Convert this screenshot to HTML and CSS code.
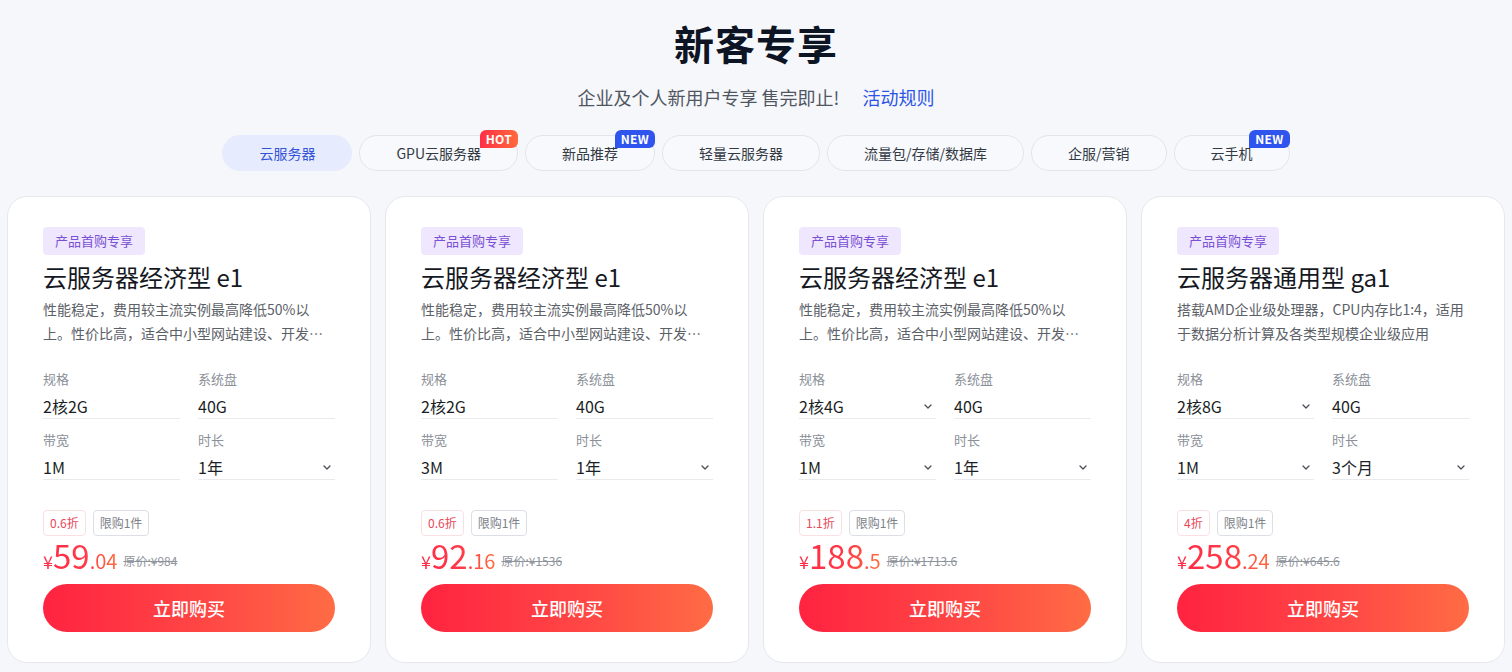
FILE: index.html
```html
<!DOCTYPE html>
<html lang="zh-CN">
<head>
<meta charset="utf-8">
<title>新客专享</title>
<link rel="stylesheet" href="styles.css">
</head>
<body>
<main class="page">
  <header class="hero">
    <h1 class="hero-title">新客专享</h1>
    <p class="hero-sub">企业及个人新用户专享 售完即止!<a class="hero-link" href="#">活动规则</a></p>
  </header>

  <nav class="tabs">
    <span class="tab tab-active">云服务器</span>
    <span class="tab">GPU云服务器<i class="badge badge-hot">HOT</i></span>
    <span class="tab">新品推荐<i class="badge badge-new">NEW</i></span>
    <span class="tab">轻量云服务器</span>
    <span class="tab">流量包/存储/数据库</span>
    <span class="tab">企服/营销</span>
    <span class="tab">云手机<i class="badge badge-new">NEW</i></span>
  </nav>

  <section class="cards">
    <article class="card">
      <span class="tag">产品首购专享</span>
      <h2 class="card-title">云服务器经济型 e1</h2>
      <p class="card-desc">性能稳定，费用较主流实例最高降低50%以上。性价比高，适合中小型网站建设、开发测试等场景</p>
      <div class="fields">
        <div class="field"><div class="field-label">规格</div><div class="field-value">2核2G</div></div>
        <div class="field"><div class="field-label">系统盘</div><div class="field-value">40G</div></div>
        <div class="field"><div class="field-label">带宽</div><div class="field-value">1M</div></div>
        <div class="field"><div class="field-label">时长</div><div class="field-value select">1年<svg class="chev" viewBox="0 0 8 5"><path d="M1 1l3 3 3-3"/></svg></div></div>
      </div>
      <div class="chips"><span class="chip chip-red">0.6折</span><span class="chip">限购1件</span></div>
      <div class="price"><span class="price-now"><span class="cur">¥</span><span class="int">59</span><span class="dec">.04</span></span><span class="price-old">原价:¥984</span></div>
      <button class="buy">立即购买</button>
    </article>

    <article class="card">
      <span class="tag">产品首购专享</span>
      <h2 class="card-title">云服务器经济型 e1</h2>
      <p class="card-desc">性能稳定，费用较主流实例最高降低50%以上。性价比高，适合中小型网站建设、开发测试等场景</p>
      <div class="fields">
        <div class="field"><div class="field-label">规格</div><div class="field-value">2核2G</div></div>
        <div class="field"><div class="field-label">系统盘</div><div class="field-value">40G</div></div>
        <div class="field"><div class="field-label">带宽</div><div class="field-value">3M</div></div>
        <div class="field"><div class="field-label">时长</div><div class="field-value select">1年<svg class="chev" viewBox="0 0 8 5"><path d="M1 1l3 3 3-3"/></svg></div></div>
      </div>
      <div class="chips"><span class="chip chip-red">0.6折</span><span class="chip">限购1件</span></div>
      <div class="price"><span class="price-now"><span class="cur">¥</span><span class="int">92</span><span class="dec">.16</span></span><span class="price-old">原价:¥1536</span></div>
      <button class="buy">立即购买</button>
    </article>

    <article class="card">
      <span class="tag">产品首购专享</span>
      <h2 class="card-title">云服务器经济型 e1</h2>
      <p class="card-desc">性能稳定，费用较主流实例最高降低50%以上。性价比高，适合中小型网站建设、开发测试等场景</p>
      <div class="fields">
        <div class="field"><div class="field-label">规格</div><div class="field-value select">2核4G<svg class="chev" viewBox="0 0 8 5"><path d="M1 1l3 3 3-3"/></svg></div></div>
        <div class="field"><div class="field-label">系统盘</div><div class="field-value">40G</div></div>
        <div class="field"><div class="field-label">带宽</div><div class="field-value select">1M<svg class="chev" viewBox="0 0 8 5"><path d="M1 1l3 3 3-3"/></svg></div></div>
        <div class="field"><div class="field-label">时长</div><div class="field-value select">1年<svg class="chev" viewBox="0 0 8 5"><path d="M1 1l3 3 3-3"/></svg></div></div>
      </div>
      <div class="chips"><span class="chip chip-red">1.1折</span><span class="chip">限购1件</span></div>
      <div class="price"><span class="price-now"><span class="cur">¥</span><span class="int">188</span><span class="dec">.5</span></span><span class="price-old">原价:¥1713.6</span></div>
      <button class="buy">立即购买</button>
    </article>

    <article class="card">
      <span class="tag">产品首购专享</span>
      <h2 class="card-title">云服务器通用型 ga1</h2>
      <p class="card-desc">搭载AMD企业级处理器，CPU内存比1:4，适用于数据分析计算及各类型规模企业级应用</p>
      <div class="fields">
        <div class="field"><div class="field-label">规格</div><div class="field-value select">2核8G<svg class="chev" viewBox="0 0 8 5"><path d="M1 1l3 3 3-3"/></svg></div></div>
        <div class="field"><div class="field-label">系统盘</div><div class="field-value">40G</div></div>
        <div class="field"><div class="field-label">带宽</div><div class="field-value select">1M<svg class="chev" viewBox="0 0 8 5"><path d="M1 1l3 3 3-3"/></svg></div></div>
        <div class="field"><div class="field-label">时长</div><div class="field-value select">3个月<svg class="chev" viewBox="0 0 8 5"><path d="M1 1l3 3 3-3"/></svg></div></div>
      </div>
      <div class="chips"><span class="chip chip-red">4折</span><span class="chip">限购1件</span></div>
      <div class="price"><span class="price-now"><span class="cur">¥</span><span class="int">258</span><span class="dec">.24</span></span><span class="price-old">原价:¥645.6</span></div>
      <button class="buy">立即购买</button>
    </article>
  </section>
</main>
</body>
</html>
```

FILE: styles.css
```css
* { box-sizing: border-box; }
html, body { margin: 0; padding: 0; }
body {
  background: #f6f7fb;
  font-family: "Noto Sans CJK SC", "Noto Sans", "Liberation Sans", sans-serif;
  color: #1f2329;
  overflow: hidden;
}
.page { width: 1512px; height: 672px; }

.hero { text-align: center; padding-top: 13px; }
.hero-title {
  margin: 0;
  font-size: 40px;
  line-height: 60px;
  font-weight: 700;
  color: #0d1424;
  letter-spacing: 1px;
}
.hero-sub {
  margin: 11px 0 0;
  font-size: 18px;
  line-height: 26px;
  color: #50565f;
}
.hero-link {
  color: #2c55e8;
  text-decoration: none;
  margin-left: 23px;
}

.tabs {
  display: flex;
  justify-content: center;
  gap: 7px;
  margin-top: 25px;
}
.tab {
  position: relative;
  height: 36px;
  line-height: 34px;
  padding: 0 36px;
  border: 1px solid #e2e5ec;
  border-radius: 18px;
  font-size: 14px;
  color: #333a44;
  background: #f8f9fc;
  white-space: nowrap;
}
.tab-active {
  background: #e6ecfd;
  border-color: #e6ecfd;
  color: #3453d6;
}
.badge {
  position: absolute;
  right: -1px;
  top: -6px;
  height: 18px;
  line-height: 18px;
  padding: 0 6px;
  font-size: 12px;
  font-style: normal;
  font-weight: 700;
  color: #fff;
  border-radius: 6px 6px 6px 0;
  letter-spacing: 0.3px;
}
.badge-hot { background: linear-gradient(90deg, #ff2e44, #ff6a3d); }
.badge-new { background: #2f55ee; }

.cards {
  display: flex;
  gap: 14px;
  padding: 0 7px;
  margin-top: 25px;
}
.card {
  flex: 1 1 0;
  height: 467px;
  background: #fff;
  border: 1px solid #e6e8ee;
  border-radius: 20px;
  padding: 30px 35px 0;
  display: flex;
  flex-direction: column;
  align-items: flex-start;
}
.tag {
  display: inline-block;
  height: 28px;
  line-height: 28px;
  padding: 0 12px;
  border-radius: 4px;
  background: #eee7fd;
  color: #7a50d4;
  font-size: 13px;
}
.card-title {
  margin: 6px 0 0;
  font-size: 24px;
  line-height: 32px;
  font-weight: 400;
  color: #15191f;
}
.card-desc {
  margin: 4px 0 0;
  width: 292px;
  font-size: 14px;
  line-height: 24px;
  color: #5c6168;
  display: -webkit-box;
  -webkit-line-clamp: 2;
  -webkit-box-orient: vertical;
  overflow: hidden;
}
.fields {
  margin-top: 25px;
  width: 292px;
  display: grid;
  grid-template-columns: 137px 137px;
  column-gap: 18px;
  row-gap: 12px;
}
.field-label {
  font-size: 13px;
  line-height: 18px;
  color: #8a8f98;
}
.field-value {
  margin-top: 6px;
  height: 25px;
  font-size: 16px;
  line-height: 24px;
  color: #1b1f25;
  border-bottom: 1px solid #e8eaee;
  display: flex;
  align-items: center;
  justify-content: space-between;
}
.chev {
  width: 8px;
  height: 5px;
  margin-right: 4px;
  fill: none;
  stroke: #4a4f57;
  stroke-width: 1.3;
  stroke-linecap: round;
  stroke-linejoin: round;
}
.chips {
  margin-top: 30px;
  display: flex;
  gap: 7px;
}
.chip {
  height: 26px;
  line-height: 24px;
  padding: 0 6px;
  border: 1px solid #dcdfe5;
  border-radius: 4px;
  font-size: 12px;
  color: #7c8189;
}
.chip.chip-red {
  border-color: #fbe0e3;
  color: #e8485a;
}
.price {
  margin-top: 0;
  height: 38px;
  line-height: 38px;
  white-space: nowrap;
}
.price-now {
  display: inline-block;
  line-height: 38px;
  background: linear-gradient(90deg, #ff2a46 0%, #ff3a48 55%, #ff6a3d 100%);
  -webkit-background-clip: text;
  background-clip: text;
  color: transparent;
}
.cur { font-size: 18px; }
.int { font-size: 33px; }
.dec { font-size: 20px; }
.price-old {
  margin-left: 6px;
  font-size: 12px;
  color: #8f949c;
  text-decoration: line-through;
  vertical-align: 3px;
}
.buy {
  margin-top: 10px;
  width: 292px;
  height: 48px;
  border: 0;
  border-radius: 24px;
  background: linear-gradient(90deg, #ff2340 0%, #ff4a45 60%, #ff6c44 100%);
  color: #fff;
  font-family: inherit;
  font-size: 18px;
  font-weight: 500;
  cursor: pointer;
}
```
